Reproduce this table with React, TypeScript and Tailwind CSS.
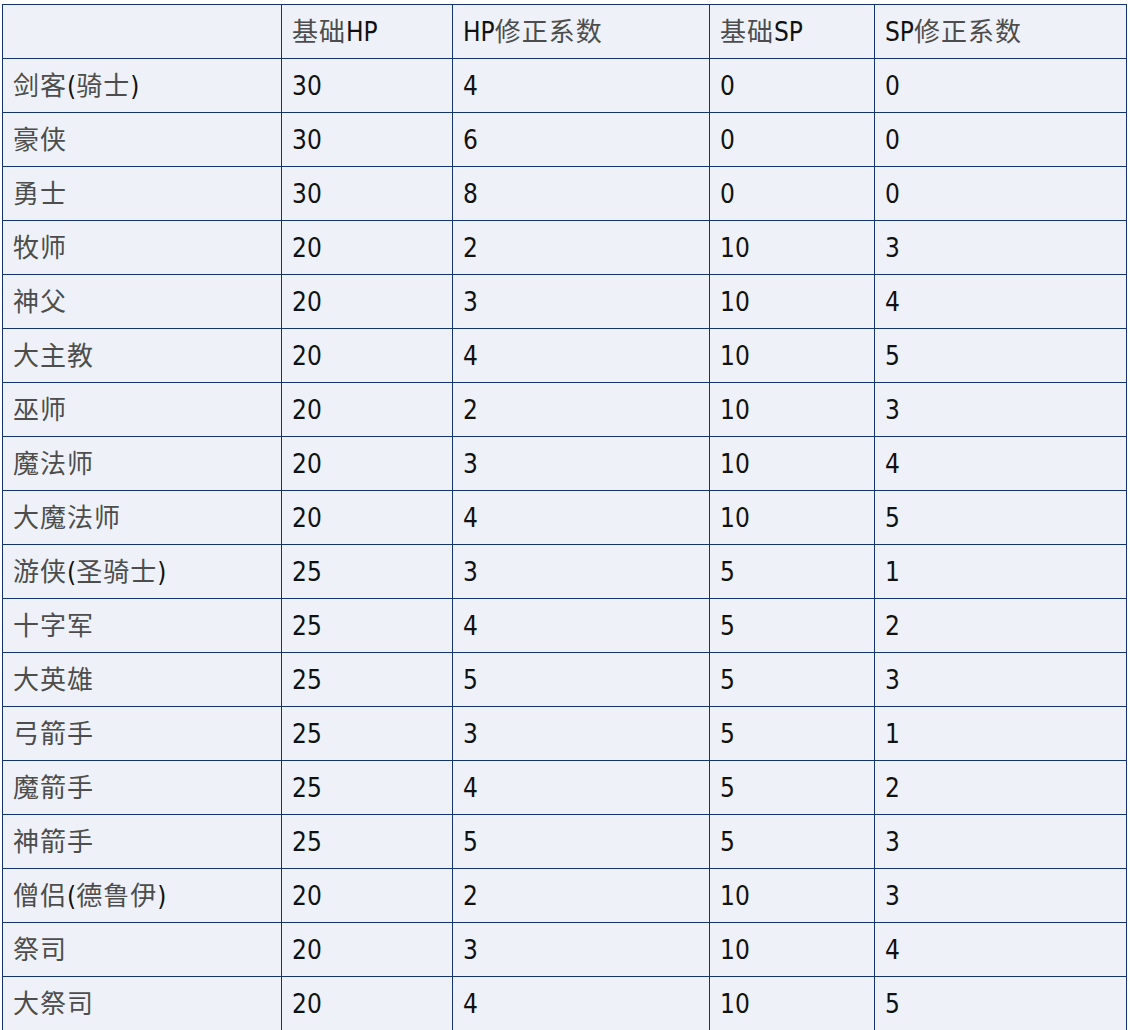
const rows: [string, number, number, number, number][] = [
  ["剑客(骑士)", 30, 4, 0, 0],
  ["豪侠", 30, 6, 0, 0],
  ["勇士", 30, 8, 0, 0],
  ["牧师", 20, 2, 10, 3],
  ["神父", 20, 3, 10, 4],
  ["大主教", 20, 4, 10, 5],
  ["巫师", 20, 2, 10, 3],
  ["魔法师", 20, 3, 10, 4],
  ["大魔法师", 20, 4, 10, 5],
  ["游侠(圣骑士)", 25, 3, 5, 1],
  ["十字军", 25, 4, 5, 2],
  ["大英雄", 25, 5, 5, 3],
  ["弓箭手", 25, 3, 5, 1],
  ["魔箭手", 25, 4, 5, 2],
  ["神箭手", 25, 5, 5, 3],
  ["僧侣(德鲁伊)", 20, 2, 10, 3],
  ["祭司", 20, 3, 10, 4],
  ["大祭司", 20, 4, 10, 5],
];

const headers = ["", "基础HP", "HP修正系数", "基础SP", "SP修正系数"];

const cell =
  "border border-[#15336f] h-[54px] px-[10px] py-0 align-middle text-left font-normal";

// CJK runs render thinner/greyer and a bit wider-spaced than the latin text
function Label({ text }: { text: string }) {
  const parts = text.split(/([\u4e00-\u9fff]+)/).filter(Boolean);
  return (
    <>
      {parts.map((p, i) =>
        /[\u4e00-\u9fff]/.test(p) ? (
          <span key={i} className="text-[#4d4d4d] tracking-[1px]">
            {p}
          </span>
        ) : (
          <span key={i}>{p}</span>
        ),
      )}
    </>
  );
}

export default function App() {
  return (
    <div className="min-h-screen bg-white pt-[4px] pl-[2px] font-['DejaVu_Sans_Condensed','Open_Sans','Noto_Sans_CJK_SC',sans-serif] text-[26px] leading-none text-[#111]">
      <table className="border-collapse table-fixed bg-[#eef2f8] w-[1124px]">
        <colgroup>
          <col className="w-[279px]" />
          <col className="w-[171px]" />
          <col className="w-[257px]" />
          <col className="w-[165px]" />
          <col className="w-[252px]" />
        </colgroup>
        <thead>
          <tr>
            {headers.map((h, i) => (
              <th key={i} className={cell}>
                <Label text={h} />
              </th>
            ))}
          </tr>
        </thead>
        <tbody>
          {rows.map((r) => (
            <tr key={r[0]}>
              {r.map((v, i) => (
                <td key={i} className={cell}>
                  <Label text={String(v)} />
                </td>
              ))}
            </tr>
          ))}
        </tbody>
      </table>
    </div>
  );
}
